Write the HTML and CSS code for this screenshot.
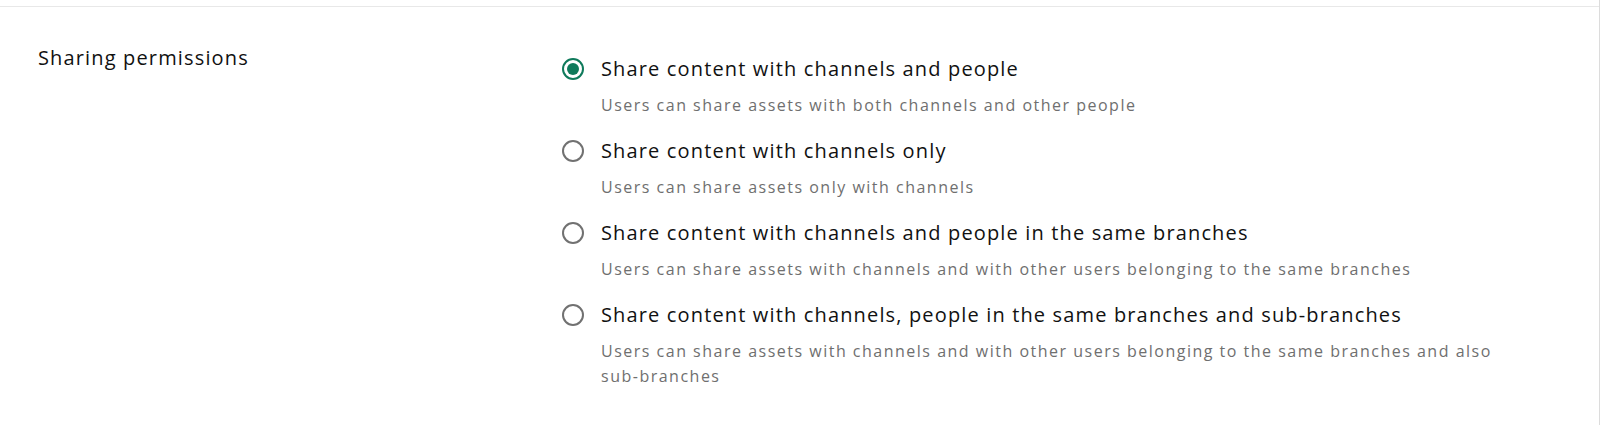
FILE: index.html
```html
<!DOCTYPE html>
<html lang="en">
<head>
<meta charset="utf-8">
<title>Sharing permissions</title>
<link rel="stylesheet" href="styles.css">
</head>
<body>
<div class="frame">
  <section class="setting">
    <h2 class="setting-label">Sharing permissions</h2>
    <div class="options" role="radiogroup">
      <label class="option">
        <svg class="radio checked" viewBox="0 0 24 24" width="24" height="24" aria-hidden="true"><circle cx="12" cy="12" r="10" fill="none" stroke-width="2"/><circle class="dot" cx="12" cy="12" r="6"/></svg>
        <span class="option-text">
          <span class="option-title">Share content with channels and people</span>
          <span class="option-desc">Users can share assets with both channels and other people</span>
        </span>
      </label>
      <label class="option">
        <svg class="radio" viewBox="0 0 24 24" width="24" height="24" aria-hidden="true"><circle cx="12" cy="12" r="10" fill="none" stroke-width="2"/></svg>
        <span class="option-text">
          <span class="option-title">Share content with channels only</span>
          <span class="option-desc">Users can share assets only with channels</span>
        </span>
      </label>
      <label class="option">
        <svg class="radio" viewBox="0 0 24 24" width="24" height="24" aria-hidden="true"><circle cx="12" cy="12" r="10" fill="none" stroke-width="2"/></svg>
        <span class="option-text">
          <span class="option-title">Share content with channels and people in the same branches</span>
          <span class="option-desc">Users can share assets with channels and with other users belonging to the same branches</span>
        </span>
      </label>
      <label class="option">
        <svg class="radio" viewBox="0 0 24 24" width="24" height="24" aria-hidden="true"><circle cx="12" cy="12" r="10" fill="none" stroke-width="2"/></svg>
        <span class="option-text">
          <span class="option-title">Share content with channels, people in the same branches and sub-branches</span>
          <span class="option-desc">Users can share assets with channels and with other users belonging to the same branches and also sub&#8209;branches</span>
        </span>
      </label>
    </div>
  </section>
</div>
</body>
</html>
```

FILE: styles.css
```css
html, body {
  margin: 0;
  padding: 0;
  background: #ffffff;
}

body {
  font-family: "Open Sans", "Noto Sans", sans-serif;
  color: #1a1a1a;
  height: 425px;
  overflow: hidden;
}

.frame {
  height: 425px;
  border-right: 1px solid #dcdcdc;
  box-sizing: border-box;
  padding-top: 6px;
}

.setting {
  border-top: 1px solid #e8e8e8;
  display: grid;
  grid-template-columns: 524px 1fr;
  align-items: start;
  padding: 36px 0 0 37px;
}

.setting-label {
  margin: 1px 0 0 1px;
  font-size: 20px;
  font-weight: 400;
  line-height: 28px;
  letter-spacing: 1.15px;
  color: #111111;
}

.options {
  display: flex;
  flex-direction: column;
  gap: 19px;
  padding-top: 12px;
}

.option {
  display: flex;
  align-items: flex-start;
  gap: 16px;
  cursor: pointer;
}

.radio {
  flex: none;
  margin-top: 2px;
  stroke: #717171;
}

.radio.checked {
  stroke: #0f7a5b;
}

.radio .dot {
  fill: #0f7a5b;
  stroke: none;
}

.option-text {
  display: flex;
  flex-direction: column;
  gap: 10px;
  max-width: 905px;
}

.option-title {
  font-size: 20px;
  line-height: 28px;
  letter-spacing: 1.15px;
  color: #111111;
}

.option-desc {
  font-size: 16px;
  line-height: 25px;
  letter-spacing: 1.5px;
  color: #6f6f6f;
}
```
